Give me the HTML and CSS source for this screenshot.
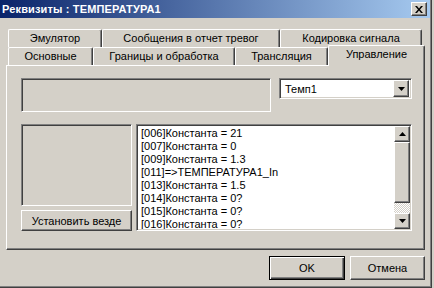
FILE: index.html
```html
<!DOCTYPE html>
<html lang="ru">
<head>
  <meta charset="UTF-8">
  <title>Реквизиты : ТЕМПЕРАТУРА1</title>
  <link rel="stylesheet" href="styles.css">
</head>
<body>
  <div class="window">
    <div class="titlebar">
      <span class="title">Реквизиты : ТЕМПЕРАТУРА1</span>
      <span class="close">
        <svg width="8" height="7" viewBox="0 0 8 7"><path d="M0 0h2l2 2.5L6 0h2L5 3.5 8 7H6L4 4.5 2 7H0l3-3.5z" fill="#000"/></svg>
      </span>
    </div>

    <div class="tabs">
      <div class="tab-row">
        <div class="tab tab-emul">Эмулятор</div>
        <div class="tab tab-msg">Сообщения в отчет тревог</div>
        <div class="tab tab-code">Кодировка сигнала</div>
      </div>
      <div class="tab-row">
        <div class="tab tab-main">Основные</div>
        <div class="tab tab-bounds">Границы и обработка</div>
        <div class="tab tab-trans">Трансляция</div>
        <div class="tab tab-ctrl active">Управление</div>
      </div>
      <div class="panel">
        <div class="panel-top">
          <div class="sunken static-box"></div>
          <div class="combo">
            <span class="combo-text">Темп1</span>
            <span class="btn3d combo-btn">
              <svg width="7" height="4" viewBox="0 0 7 4"><path d="M0 0h7L3.5 4z" fill="#000"/></svg>
            </span>
          </div>
        </div>
        <div class="panel-bottom">
          <div class="side">
            <div class="sunken side-box"></div>
            <button class="btn3d btn-set">Установить везде</button>
          </div>
          <div class="listbox">
            <div class="lines">
              <div>[006]Константа = 21</div>
              <div>[007]Константа = 0</div>
              <div>[009]Константа = 1.3</div>
              <div>[011]=&gt;ТЕМПЕРАТУРА1_In</div>
              <div>[013]Константа = 1.5</div>
              <div>[014]Константа = 0?</div>
              <div>[015]Константа = 0?</div>
              <div>[016]Константа = 0?</div>
            </div>
            <div class="scrollbar">
              <span class="btn3d sb-btn">
                <svg width="7" height="4" viewBox="0 0 7 4"><path d="M3.5 0L7 4H0z" fill="#000"/></svg>
              </span>
              <span class="btn3d sb-thumb"></span>
              <span class="sb-track"></span>
              <span class="btn3d sb-btn">
                <svg width="7" height="4" viewBox="0 0 7 4"><path d="M0 0h7L3.5 4z" fill="#000"/></svg>
              </span>
            </div>
          </div>
        </div>
      </div>
    </div>

    <div class="footer">
      <button class="btn3d btn-ok">OK</button>
      <button class="btn3d btn-cancel">Отмена</button>
    </div>
  </div>
</body>
</html>
```

FILE: styles.css
```css
:root {
  --face: #d4d0c8;
  --light: #ffffff;
  --shadow: #808080;
  --dark: #404040;
}

* {
  box-sizing: border-box;
}

body {
  margin: 0;
  background: var(--face);
  font-family: "Liberation Sans", Arial, sans-serif;
  font-size: 11px;
  color: #000;
  width: 434px;
  height: 288px;
  overflow: hidden;
}

.window {
  width: 432px;
  height: 288px;
  border-right: 1px solid var(--dark);
  border-bottom: 1px solid var(--dark);
  box-shadow: inset -1px -1px var(--shadow);
}

.titlebar {
  height: 18px;
  width: 430px;
  background: linear-gradient(to right, #0a246a, #a6caf0);
  display: flex;
  align-items: center;
  justify-content: space-between;
  padding: 0 3px 0 2px;
}
.title {
  color: #fff;
  font-weight: bold;
  font-size: 11px;
  letter-spacing: 0.15px;
}
.close {
  width: 16px;
  height: 14px;
  background: var(--face);
  border-top: 1px solid var(--light);
  border-left: 1px solid var(--light);
  border-right: 1px solid var(--dark);
  border-bottom: 1px solid var(--dark);
  box-shadow: inset -1px -1px var(--shadow);
  display: flex;
  align-items: center;
  justify-content: center;
}

/* tabs */
.tabs {
  margin: 11px 0 0 6px;
  width: 419px;
}
.tab-row {
  display: flex;
  height: 18px;
  padding-left: 2px;
}
.tab {
  height: 18px;
  border-top: 1px solid var(--light);
  border-left: 1px solid var(--light);
  border-right: 1px solid var(--dark);
  border-top-left-radius: 2px;
  border-top-right-radius: 2px;
  box-shadow: inset -1px 0 var(--shadow);
  display: flex;
  align-items: center;
  justify-content: center;
  padding-bottom: 1px;
  background: var(--face);
}
.tab-emul { width: 94px; }
.tab-msg { width: 178px; }
.tab-code { width: 142px; }
.tab-main { width: 85px; }
.tab-bounds { width: 142px; }
.tab-trans { width: 93px; }
.tab-ctrl { width: 97px; }
.tab.active {
  height: 21px;
  margin-top: -2px;
  padding-bottom: 4px;
  position: relative;
  z-index: 1;
}

.panel {
  height: 185px;
  border-top: 1px solid var(--light);
  border-left: 1px solid var(--light);
  border-right: 1px solid var(--dark);
  border-bottom: 1px solid var(--dark);
  box-shadow: inset -1px -1px var(--shadow);
  padding: 12px 0 0 14px;
}

.sunken {
  border-top: 1px solid var(--shadow);
  border-left: 1px solid var(--shadow);
  border-right: 1px solid var(--light);
  border-bottom: 1px solid var(--light);
  box-shadow: inset 1px 1px var(--dark), inset -1px -1px var(--face);
}

.panel-top {
  display: flex;
  gap: 8px;
}
.static-box {
  width: 250px;
  height: 34px;
}
.combo {
  width: 133px;
  height: 21px;
  background: #fff;
  border-top: 1px solid var(--shadow);
  border-left: 1px solid var(--shadow);
  border-right: 1px solid var(--light);
  border-bottom: 1px solid var(--light);
  box-shadow: inset 1px 1px var(--dark), inset -1px -1px var(--face);
  display: flex;
  align-items: center;
  padding: 2px;
}
.combo-text {
  flex: 1;
  padding-left: 3px;
}
.combo-btn {
  width: 16px;
  height: 17px;
}

.btn3d {
  background: var(--face);
  border-top: 1px solid var(--light);
  border-left: 1px solid var(--light);
  border-right: 1px solid var(--dark);
  border-bottom: 1px solid var(--dark);
  box-shadow: inset -1px -1px var(--shadow);
  display: flex;
  align-items: center;
  justify-content: center;
  font-family: inherit;
  font-size: 11px;
  color: #000;
  padding: 0;
}

.panel-bottom {
  display: flex;
  gap: 4px;
  margin-top: 12px;
}
.side {
  width: 111px;
  display: flex;
  flex-direction: column;
  gap: 4px;
}
.side-box {
  height: 82px;
}
.btn-set {
  height: 21px;
}

.listbox {
  width: 276px;
  height: 107px;
  background: #fff;
  border-top: 1px solid var(--shadow);
  border-left: 1px solid var(--shadow);
  border-right: 1px solid var(--light);
  border-bottom: 1px solid var(--light);
  box-shadow: inset 1px 1px var(--dark), inset -1px -1px var(--face);
  padding: 1px;
  display: flex;
}
.lines {
  flex: 1;
  overflow: hidden;
  padding: 1px 0 0 3px;
  line-height: 13px;
  white-space: nowrap;
}
.scrollbar {
  width: 16px;
  display: flex;
  flex-direction: column;
}
.sb-btn {
  height: 16px;
  flex: none;
}
.sb-thumb {
  height: 61px;
  flex: none;
}
.sb-track {
  flex: 1;
  background: repeating-conic-gradient(#fff 0 25%, var(--face) 0 50%) 0 0 / 2px 2px;
}

.footer {
  width: 419px;
  margin: 6px 0 0 6px;
  display: flex;
  justify-content: flex-end;
  gap: 5px;
}
.btn-ok {
  width: 76px;
  height: 24px;
  border: 1px solid #000;
  box-shadow: inset 1px 1px var(--light), inset -1px -1px var(--dark), inset -2px -2px var(--shadow);
}
.btn-cancel {
  width: 75px;
  height: 24px;
}
```
